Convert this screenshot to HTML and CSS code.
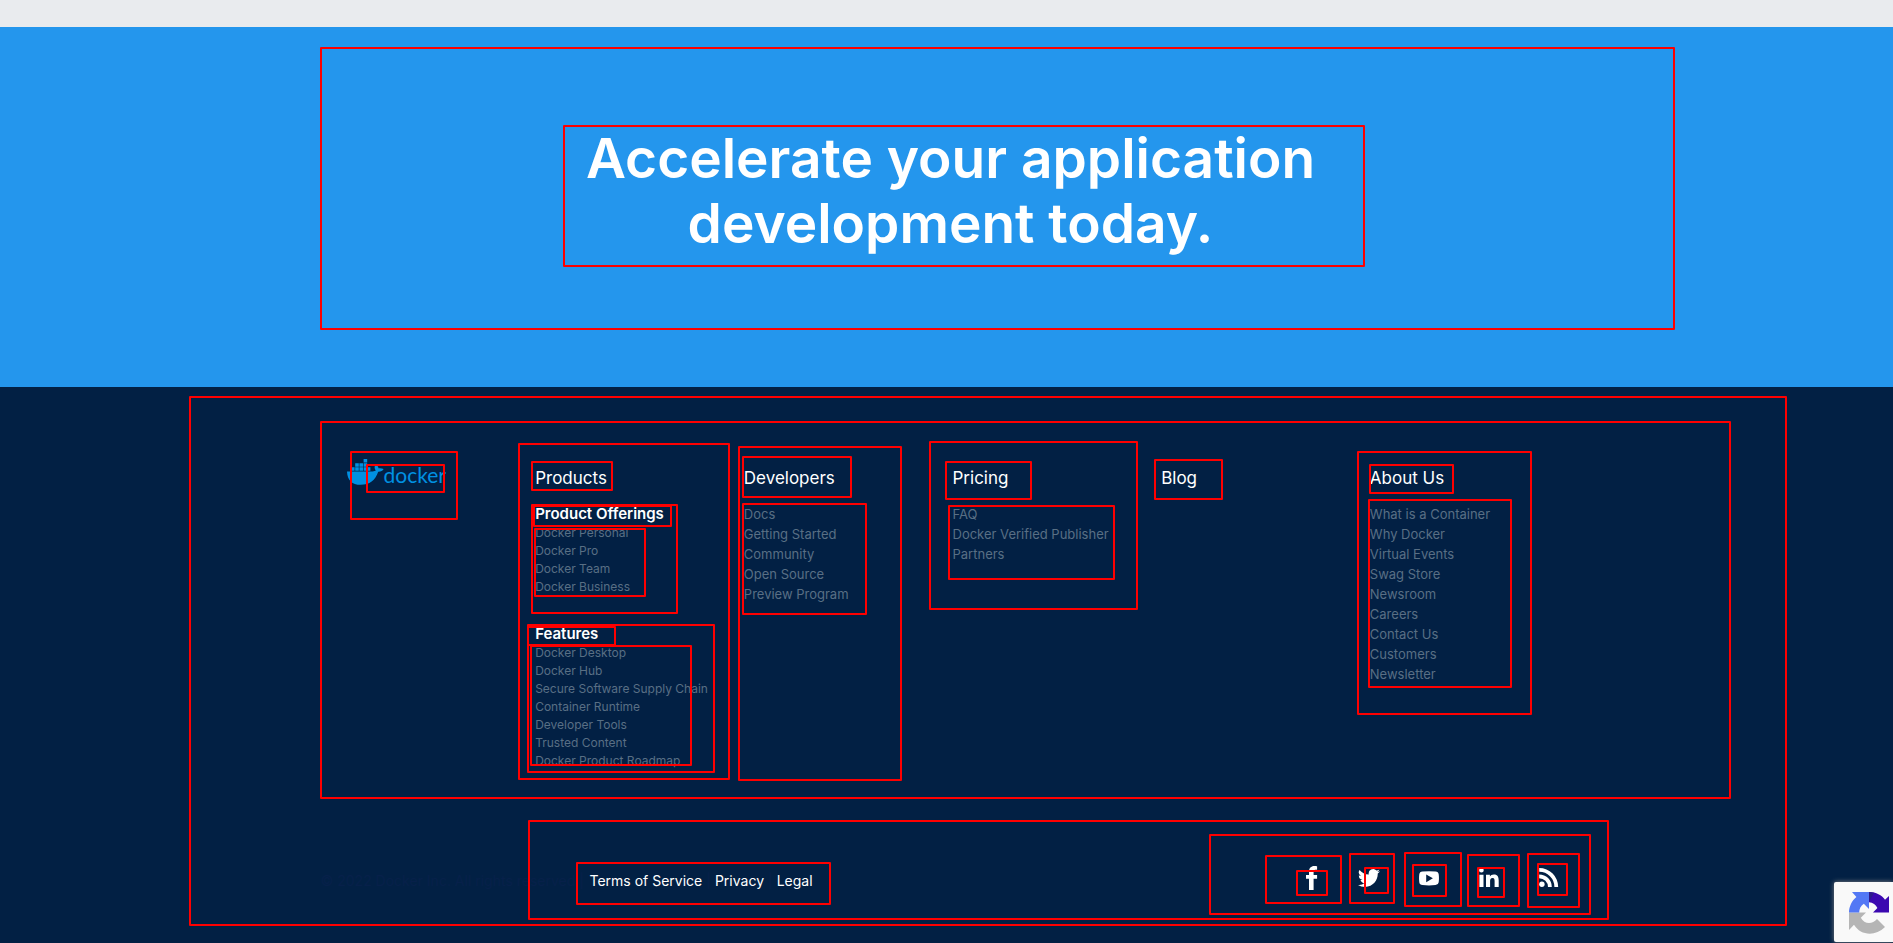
FILE: index.html
```html
<!DOCTYPE html>
<html lang="en">
<head>
<meta charset="utf-8">
<title>Docker</title>
<link rel="stylesheet" href="styles.css">
</head>
<body>
<div class="strip"></div>
<section class="hero">
  <h1 class="hero-title">Accelerate your application<br>development today.</h1>
</section>
<footer class="footer">
  <div class="columns">
    <div class="column column-logo">
      <a class="logo" href="#">
        <svg class="whale" viewBox="0 0 37 26" width="37" height="26" aria-hidden="true">
          <path d="M0 12.4h25.6c1.6 0 2.7-.4 3.2-.8-1.6-1.800-1.500-4.500-.2-6 1.900 1 2.800 2.500 2.900 3.700 1.700-.3 3.600-.1 5.100.8-.9 2-3.100 2.800-5.400 2.700C28.200 21.500 22.700 25.800 13.600 25.800 5 25.800.3 21.200 0 12.400z"/>
          <path d="M4 8.300h3.600v3.400H4zM8.200 8.300h3.600v3.400H8.200zM12.400 8.300H16v3.400h-3.600zM16.600 8.300h3.600v3.400h-3.600zM20.800 8.300h2.600v3.400h-2.600zM8.200 4.200h3.600v3.500H8.200zM12.400 4.200H16v3.500h-3.600zM16.600 4.200h3.600v3.500h-3.600zM16.600 0h3.600v3.500h-3.600z"/>
        </svg>
        <span class="wordmark">docker</span>
      </a>
    </div>
    <div class="column">
      <h2 class="column-title"><a href="#">Products</a></h2>
      <h3 class="group-title">Product Offerings</h3>
      <ul class="links links-small">
        <li><a href="#">Docker Personal</a></li>
        <li><a href="#">Docker Pro</a></li>
        <li><a href="#">Docker Team</a></li>
        <li><a href="#">Docker Business</a></li>
      </ul>
      <h3 class="group-title group-later">Features</h3>
      <ul class="links links-small">
        <li><a href="#">Docker Desktop</a></li>
        <li><a href="#">Docker Hub</a></li>
        <li><a href="#">Secure Software Supply Chain</a></li>
        <li><a href="#">Container Runtime</a></li>
        <li><a href="#">Developer Tools</a></li>
        <li><a href="#">Trusted Content</a></li>
        <li><a href="#">Docker Product Roadmap</a></li>
      </ul>
    </div>
    <div class="column">
      <h2 class="column-title"><a href="#">Developers</a></h2>
      <ul class="links">
        <li><a href="#">Docs</a></li>
        <li><a href="#">Getting Started</a></li>
        <li><a href="#">Community</a></li>
        <li><a href="#">Open Source</a></li>
        <li><a href="#">Preview Program</a></li>
      </ul>
    </div>
    <div class="column">
      <h2 class="column-title"><a href="#">Pricing</a></h2>
      <ul class="links">
        <li><a href="#">FAQ</a></li>
        <li><a href="#">Docker Verified Publisher</a></li>
        <li><a href="#">Partners</a></li>
      </ul>
    </div>
    <div class="column">
      <h2 class="column-title"><a href="#">Blog</a></h2>
    </div>
    <div class="column">
      <h2 class="column-title"><a href="#">About Us</a></h2>
      <ul class="links">
        <li><a href="#">What is a Container</a></li>
        <li><a href="#">Why Docker</a></li>
        <li><a href="#">Virtual Events</a></li>
        <li><a href="#">Swag Store</a></li>
        <li><a href="#">Newsroom</a></li>
        <li><a href="#">Careers</a></li>
        <li><a href="#">Contact Us</a></li>
        <li><a href="#">Customers</a></li>
        <li><a href="#">Newsletter</a></li>
      </ul>
    </div>
  </div>
  <div class="bottom">
    <p class="copyright">© 2022 Docker Inc. All rights reserved |</p>
    <nav class="legal">
      <a href="#">Terms of Service</a><span class="bar">|</span><a href="#">Privacy</a><span class="bar">|</span><a href="#">Legal</a>
    </nav>
    <nav class="social">
      <a href="#" aria-label="Facebook"><svg viewBox="0 0 20 24" width="20" height="24"><path d="M10 24V12.800H7V8.900h3V5.700C10 2.200 12 0 15.200 0c1.300 0 2.400.1 2.900.2v3.600h-1.700c-1.500 0-1.800.8-1.800 1.900v3.200h3.500v3.900h-3.500V24z"/></svg></a>
      <a href="#" aria-label="Twitter"><svg viewBox="0 0 24 24" width="22" height="24"><path d="M23.950 4.570a10 10 0 0 1-2.820.770 4.960 4.960 0 0 0 2.160-2.720c-.95.550-2 .950-3.130 1.180a4.920 4.920 0 0 0-8.380 4.480C7.690 8.090 4.070 6.130 1.640 3.160a4.930 4.930 0 0 0 1.520 6.570 4.900 4.900 0 0 1-2.230-.610v.060a4.920 4.920 0 0 0 3.950 4.830 5 5 0 0 1-2.210.080 4.940 4.940 0 0 0 4.600 3.420A9.870 9.870 0 0 1 0 19.540a14 14 0 0 0 7.550 2.210c9.050 0 14-7.500 14-13.980 0-.210 0-.420-.020-.630a9.900 9.900 0 0 0 2.460-2.550z"/></svg></a>
      <a href="#" aria-label="YouTube"><svg viewBox="0 0 20 24" width="20" height="24"><path fill-rule="evenodd" d="M3.500 5.500Q10 4.800 16.500 5.500 19.400 5.700 19.700 8.300 20.200 12 19.700 16.200 19.400 18.800 16.500 19.100 10 19.700 3.500 19.100.600 18.800.3 16.200-.2 12 .3 8.300.600 5.700 3.500 5.500zM7.200 8.400v7.800l6.700-3.900z"/></svg></a>
      <a href="#" aria-label="LinkedIn"><svg viewBox="0 0 20 24" width="20" height="24"><path d="M.4 8.700h4.100V21H.4zM2.400 1.800a2.300 2.300 0 1 1 0 4.700 2.300 2.300 0 0 1 0-4.700zM7 8.700h3.900v1.700c.7-1.200 2-2 3.900-2 4.100 0 4.900 2.700 4.900 6.200V21h-4.100v-5.700c0-1.500-.1-3.300-2-3.300-2.100 0-2.500 1.600-2.500 3.200V21H7z"/></svg></a>
      <a href="#" aria-label="RSS"><svg viewBox="0 0 20 24" width="20" height="24"><circle cx="2.900" cy="18.300" r="2.700"/><path d="M.2 8.400v3.800A8.800 8.800 0 0 1 9 21h3.800A12.600 12.600 0 0 0 .2 8.400zM.2 2v3.800A15.200 15.200 0 0 1 15.400 21h3.800A19 19 0 0 0 .2 2z"/></svg></a>
    </nav>
  </div>
</footer>
<aside class="badge">
  <svg viewBox="0 0 40 42" width="40" height="42" role="img" aria-label="reCAPTCHA">
    <path fill="#b5b5b5" d="M0 20.500h17l-5.200 5.200c3.600 6.800 11.400 7 16.200 1.300l8 8C26 45 11.500 43.500 5 32.800L0 38z"/>
    <path fill="#5378f5" d="M20 0v17l-5.200-5.200C11.700 14 10.200 17 10.200 20.500H0C0 14.500 3 8.500 7.400 5L3 0z"/>
    <path fill="#3b08b0" d="M20 0c7.200 0 12.700 3.200 16 7.700L40 4v16.500H24l4.400-4.500c-1.500-3.500-4.500-5.600-8.400-5.800z"/>
    <path fill="#2d1a8c" d="M20 0c1.800 0 3.500.2 5 .7L20 10z"/>
  </svg>
</aside>
<svg class="outlines" aria-hidden="true">
  <rect x="321" y="48" width="1353" height="281"/>
  <rect x="564" y="126" width="800" height="140"/>
  <rect x="190" y="397" width="1596" height="528"/>
  <rect x="321" y="422" width="1409" height="376"/>
  <rect x="351" y="452" width="106" height="67"/>
  <rect x="367" y="465" width="77" height="27"/>
  <rect x="519" y="444" width="210" height="335"/>
  <rect x="532" y="462" width="80" height="28"/>
  <rect x="532" y="505" width="145" height="108"/>
  <rect x="534" y="506" width="137" height="20"/>
  <rect x="535" y="529" width="110" height="67"/>
  <rect x="528" y="625" width="186" height="147"/>
  <rect x="528" y="627" width="87" height="18"/>
  <rect x="531" y="646" width="160" height="119"/>
  <rect x="739" y="447" width="162" height="333"/>
  <rect x="743" y="457" width="108" height="40"/>
  <rect x="743" y="504" width="123" height="110"/>
  <rect x="930" y="442" width="207" height="167"/>
  <rect x="946" y="462" width="85" height="37"/>
  <rect x="949" y="506" width="165" height="73"/>
  <rect x="1155" y="460" width="67" height="39"/>
  <rect x="1358" y="452" width="173" height="262"/>
  <rect x="1370" y="465" width="83" height="28"/>
  <rect x="1369" y="500" width="142" height="187"/>
  <rect x="529" y="821" width="1079" height="98"/>
  <rect x="577" y="863" width="253" height="41"/>
  <rect x="1210" y="835" width="380" height="79"/>
  <rect x="1266" y="856" width="75" height="47"/>
  <rect x="1297" y="871" width="30" height="24"/>
  <rect x="1350" y="854" width="44" height="49"/>
  <rect x="1365" y="868" width="23" height="25"/>
  <rect x="1405" y="853" width="56" height="53"/>
  <rect x="1413" y="865" width="33" height="31"/>
  <rect x="1468" y="855" width="51" height="51"/>
  <rect x="1478" y="868" width="26" height="29"/>
  <rect x="1528" y="854" width="51" height="53"/>
  <rect x="1538" y="864" width="29" height="31"/>
</svg>
</body>
</html>
```
FILE: styles.css
```css
* { box-sizing: border-box; }

body {
  margin: 0;
  min-height: 100vh;
  display: flex;
  flex-direction: column;
  position: relative;
  overflow: hidden;
  background: #022044;
  color: #fff;
  font-family: Inter, "Open Sans", sans-serif;
}

a { color: inherit; text-decoration: none; }
h1, h2, h3, p, ul { margin: 0; padding: 0; }
ul { list-style: none; }

.strip { height: 27px; background: #e9ebee; }

.hero {
  padding: 99px 0 131px 8px;
  background: #2496ed;
  text-align: center;
}

.hero-title {
  font-size: 55px;
  line-height: 65px;
  font-weight: 600;
}

.footer {
  flex: 1;
  padding: 72px 0 40px;
}

.columns,
.bottom {
  width: 100%;
  max-width: 1252px;
  margin: 0 auto;
}

.columns {
  display: grid;
  grid-template-columns: repeat(6, 1fr);
}

.column { padding: 8px 0 0 6px; }
.column-logo { padding: 0 0 0 26px; }

.logo { display: flex; fill: #0091e2; color: #0091e2; }

.wordmark {
  font-family: Lato, sans-serif;
  font-size: 21px;
  line-height: 32px;
}

.column-title {
  margin-bottom: 15px;
  font-size: 17px;
  line-height: 22px;
  font-weight: 400;
}

.links { color: #596f84; font-size: 13px; line-height: 20px; }
.links-small { font-size: 12px; line-height: 18px; }

.group-title { font-size: 15px; line-height: 20px; font-weight: 600; }
.group-later { margin-top: 28px; }

.bottom {
  display: flex;
  align-items: flex-end;
  margin-top: 96px;
  padding-right: 14px;
  font-size: 14px;
  line-height: 24px;
}

.copyright {
  width: 263px;
  margin-right: 6px;
  color: #07204a;
  text-align: right;
  white-space: nowrap;
}

.legal { display: flex; gap: 4px; }
.bar { color: #07204a; }

.social {
  display: flex;
  gap: 40px;
  margin-left: auto;
  padding-bottom: 3px;
  fill: #fff;
}

.social a {
  display: flex;
  justify-content: center;
  width: 20px;
  height: 24px;
}

.social svg { flex: none; }

.badge {
  position: absolute;
  right: 0;
  bottom: 1px;
  width: 59px;
  height: 60px;
  padding: 10px 0 0 15px;
  border-radius: 2px 0 0 2px;
  background: #f9f9f9;
  box-shadow: 0 0 5px gray;
}

.outlines {
  position: absolute;
  top: 0;
  left: 0;
  width: 100%;
  height: 100%;
  fill: none;
  stroke: #f00;
  stroke-width: 2;
  stroke-linejoin: round;
  pointer-events: none;
}
```
